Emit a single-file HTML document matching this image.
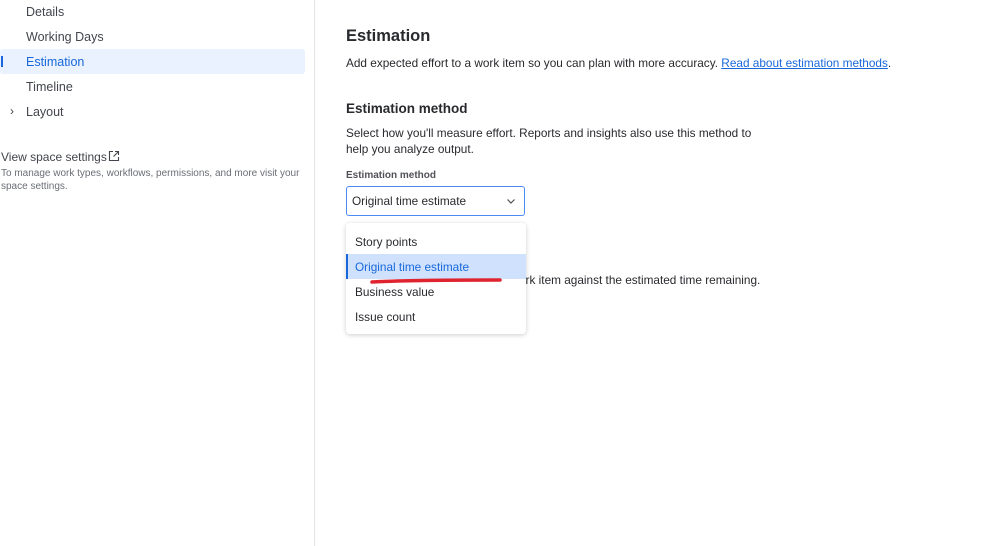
<!DOCTYPE html>
<html><head><style>
body{margin:0;width:999px;height:546px;background:#fff;font-family:"Liberation Sans",sans-serif;color:#292a2e;position:relative;overflow:hidden}
.a{position:absolute;white-space:nowrap}
.nav{font-size:12.5px;color:#42454c}
.t{font-size:11.8px}
</style></head><body>
<div class="a" style="left:314px;top:0;width:1px;height:546px;background:#e4e5e7"></div>
<div class="a nav" style="left:26px;top:5px">Details</div>
<div class="a nav" style="left:26px;top:30px">Working Days</div>
<div class="a" style="left:0;top:49px;width:305px;height:25px;background:#e9f2fe;border-radius:3px"></div>
<div class="a" style="left:1px;top:56px;width:2px;height:11px;background:#1868db"></div>
<div class="a nav" style="left:26px;top:55px;color:#1868db">Estimation</div>
<div class="a nav" style="left:26px;top:80px">Timeline</div>
<div class="a nav" style="left:10px;top:104px;font-size:12px">›</div>
<div class="a nav" style="left:26px;top:105px">Layout</div>
<div class="a nav" style="left:1px;top:150px;font-size:12px">View space settings</div>
<svg class="a" style="left:108px;top:150px" width="12" height="12" viewBox="0 0 12 12" fill="none" stroke="#42454c" stroke-width="1.1"><path d="M5 1.5H1.5v9h9V7M7 1.5h3.5V5M10.5 1.5L5.5 6.5"/></svg>
<div class="a" style="left:1px;top:167px;font-size:10px;color:#6b6e76;line-height:13px">To manage work types, workflows, permissions, and more visit your<br>space settings.</div>

<div class="a" style="left:346px;top:27px;font-size:16.5px;font-weight:bold">Estimation</div>
<div class="a t" style="left:346px;top:56px">Add expected effort to a work item so you can plan with more accuracy. <span style="color:#1868db;text-decoration:underline">Read about estimation methods</span>.</div>
<div class="a" style="left:346px;top:101px;font-size:13.5px;font-weight:bold">Estimation method</div>
<div class="a t" style="left:346px;top:125px;line-height:16px">Select how you'll measure effort. Reports and insights also use this method to<br>help you analyze output.</div>
<div class="a" style="left:346px;top:170px;font-size:10px;font-weight:bold;color:#505258">Estimation method</div>
<div class="a" style="left:346px;top:186px;width:177px;height:28px;border:1.5px solid #4c8bf5;border-radius:3px"></div>
<div class="a t" style="left:352px;top:194px">Original time estimate</div>
<svg class="a" style="left:506px;top:197px" width="10" height="8" viewBox="0 0 10 8" fill="none" stroke="#505258" stroke-width="1.2"><path d="M1.5 2.5l3.5 3.5 3.5-3.5"/></svg>
<div class="a t" style="left:519px;top:273px">ork item against the estimated time remaining.</div>
<div class="a" style="left:346px;top:223px;width:180px;height:111px;background:#fff;border-radius:4px;box-shadow:0 1px 5px rgba(0,0,0,.2)"></div>
<div class="a" style="left:346px;top:254px;width:180px;height:25px;background:#cfe1fd"></div>
<div class="a" style="left:346px;top:254px;width:2px;height:25px;background:#1868db"></div>
<div class="a t" style="left:355px;top:235px">Story points</div>
<div class="a t" style="left:355px;top:260px;color:#1868db">Original time estimate</div>
<div class="a t" style="left:355px;top:285px">Business value</div>
<div class="a t" style="left:355px;top:310px">Issue count</div>
<svg class="a" style="left:370px;top:276px" width="135" height="10"><path d="M2 6C40 4 100 4 130 4" stroke="#e0242f" stroke-width="3.5" fill="none" stroke-linecap="round"/></svg>
</body></html>
